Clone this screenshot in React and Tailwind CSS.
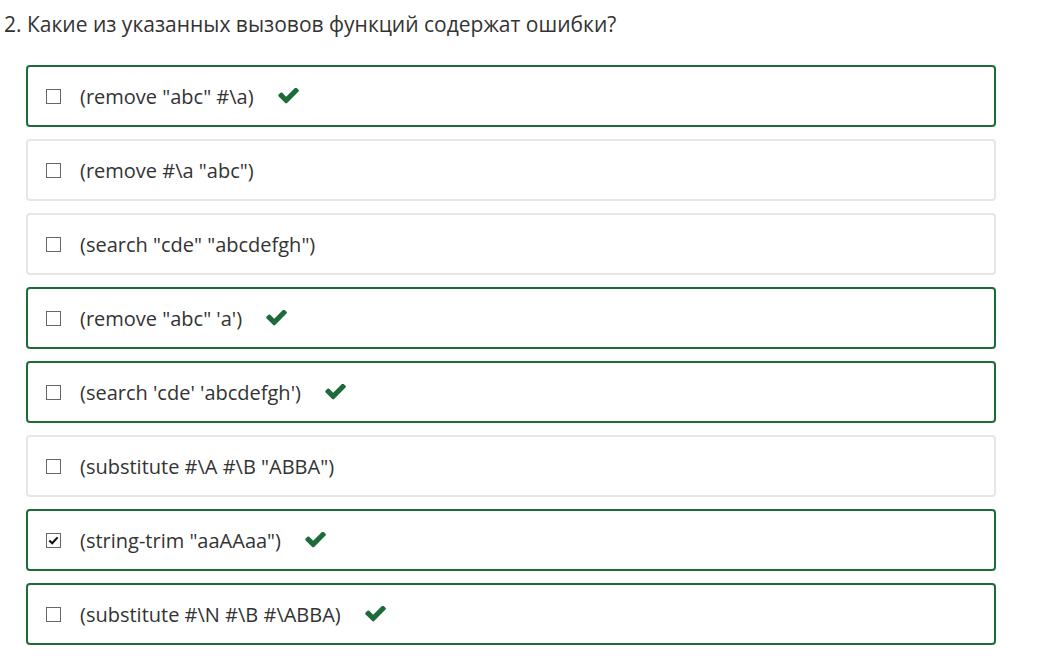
import React from 'react';

const options = [
  {text: '(remove "abc" #\\a)', correct: true, checked: false},
  {text: '(remove #\\a "abc")', correct: false, checked: false},
  {text: '(search "cde" "abcdefgh")', correct: false, checked: false},
  {text: "(remove \"abc\" 'a')", correct: true, checked: false},
  {text: "(search 'cde' 'abcdefgh')", correct: true, checked: false},
  {text: '(substitute #\\A #\\B "ABBA")', correct: false, checked: false},
  {text: '(string-trim "aaAAaa")', correct: true, checked: true},
  {text: '(substitute #\\N #\\B #\\ABBA)', correct: true, checked: false}
];

// thick check mark, same shape as the old font-awesome glyph
const CheckMark = () => (
  <svg width="21" height="16" viewBox="100 420 1580 1090" className="ml-[24px] shrink-0">
    <path
      fill="#1e6b3a"
      d="M1671 566q0 40-28 68l-724 724-136 136q-28 28-68 28t-68-28l-136-136-362-362q-28-28-28-68t28-68l136-136q28-28 68-28t68 28l294 295 656-657q28-28 68-28t68 28l136 136q28 28 28 68z"
    />
  </svg>
);

const Checkbox = ({checked}) => (
  <span className="w-[15px] h-[15px] border border-[#666] bg-white flex items-center justify-center shrink-0">
    {checked && (
      <svg width="11" height="9" viewBox="0 0 11 9">
        <path d="M1.3 4.5 L4.2 7.3 L9.6 1.4" fill="none" stroke="#111" strokeWidth="2.1" />
      </svg>
    )}
  </span>
);

const App = () => {
  return (
    <div className="w-[1037px] h-[658px] bg-white text-[#333] overflow-hidden" style={{fontFamily: '"Open Sans", sans-serif'}}>
      <h2 className="pl-[4px] pt-[10px] text-[21px] leading-[28px] font-normal">
        2. Какие из указанных вызовов функций содержат ошибки?
      </h2>
      <ul className="ml-[26px] w-[970px] mt-[27px] flex flex-col gap-[12px]">
        {options.map((opt, i) => (
          <li
            key={i}
            className={
              'h-[62px] rounded-[4px] border-2 flex items-center pl-[18px] ' +
              (opt.correct ? 'border-[#1e6b3a]' : 'border-[#e6e6e6]')
            }
          >
            <Checkbox checked={opt.checked} />
            <span className="ml-[19px] pt-[2px] text-[20px] leading-[26px]">{opt.text}</span>
            {opt.correct && <CheckMark />}
          </li>
        ))}
      </ul>
    </div>
  );
};

export default App;
